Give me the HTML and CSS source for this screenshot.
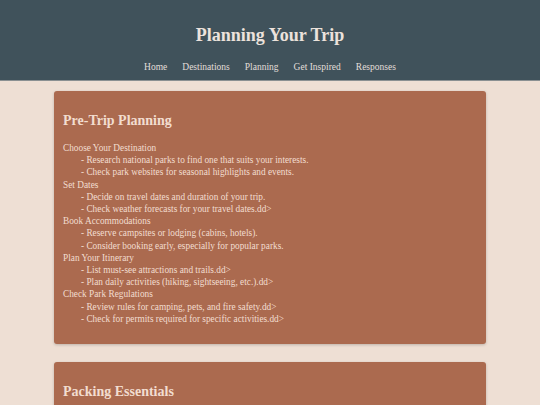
FILE: index.html
```html
<!DOCTYPE html>
<html lang="en">
<head>
	<meta charset="UTF-8">
	<meta name="viewport" content="width=device-width, initial-scale=1.0">
	<title>Planning Your Trip</title>
	<link rel="stylesheet" href="styles.css">
</head>
<body>
	<header class="top">
		<h1>Planning Your Trip</h1>
		<nav class="menu">
			<a href="#">Home</a>
			<a href="#">Destinations</a>
			<a href="#">Planning</a>
			<a href="#">Get Inspired</a>
			<a href="#">Responses</a>
		</nav>
	</header>
	<main class="conteiner">
		<section class="card">
			<h2>Pre-Trip Planning</h2>
			<dl>
				<dt>Choose Your Destination</dt>
				<dd>- Research national parks to find one that suits your interests.</dd>
				<dd>- Check park websites for seasonal highlights and events.</dd>
				<dt>Set Dates</dt>
				<dd>- Decide on travel dates and duration of your trip.</dd>
				<dd>- Check weather forecasts for your travel dates.dd&gt;</dd>
				<dt>Book Accommodations</dt>
				<dd>- Reserve campsites or lodging (cabins, hotels).</dd>
				<dd>- Consider booking early, especially for popular parks.</dd>
				<dt>Plan Your Itinerary</dt>
				<dd>- List must-see attractions and trails.dd&gt;</dd>
				<dd>- Plan daily activities (hiking, sightseeing, etc.).dd&gt;</dd>
				<dt>Check Park Regulations</dt>
				<dd>- Review rules for camping, pets, and fire safety.dd&gt;</dd>
				<dd>- Check for permits required for specific activities.dd&gt;</dd>
			</dl>
		</section>
		<section class="card">
			<h2>Packing Essentials</h2>
			<dl>
				<dt>Clothing</dt>
				<dd>- Layers for changing weather.</dd>
				<dd>- Sturdy hiking boots and socks.</dd>
			</dl>
		</section>
	</main>
</body>
</html>
```

FILE: styles.css
```css
*{
	margin: 0;
	padding: 0;
	box-sizing: border-box;
	font-family: "Liberation Serif", "Times New Roman", serif;
}

body{
	background-color: #eedfd4;
	color: #f2ddd0;
}

.top{
	background-color: #40525b;
	border-bottom: 1px solid #8a9092;
	height: 81px;
	padding-top: 23px;
	text-align: center;
}

.top h1{
	color: #ece2dc;
	font-size: 18px;
	line-height: 24px;
	font-weight: bold;
}

.menu{
	display: flex;
	justify-content: center;
	gap: 15px;
	margin-top: 14px;
}

.menu a{
	color: #e2ded9;
	text-decoration: none;
	font-size: 9.5px;
	line-height: 12px;
}

.conteiner{
	padding: 10px 0;
}

.card{
	width: 432px;
	margin: 0 auto 18px;
	padding: 9px;
	background-color: #ab6a4f;
	border-radius: 3px;
	box-shadow: 0 1px 3px rgba(0,0,0,.2);
}

.card h2{
	font-size: 14px;
	line-height: 16px;
	margin: 13px 0 13px;
}

.card dl{
	font-size: 9.3px;
	line-height: 12.2px;
	margin-bottom: 10px;
}

.card dd{
	margin-left: 18px;
}
```
